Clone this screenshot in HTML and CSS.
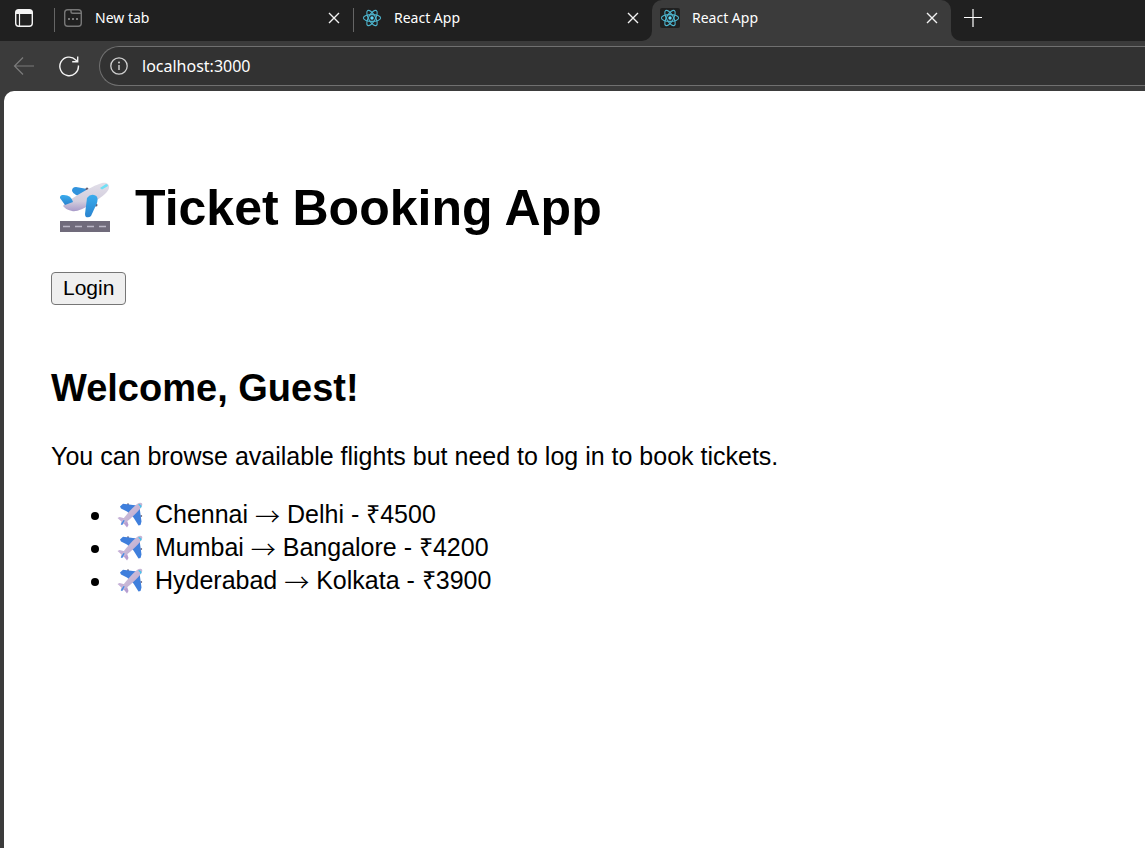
FILE: index.html
```
<!DOCTYPE html>
<html lang="en">
<head>
<meta charset="utf-8">
<title>React App</title>
<link rel="stylesheet" href="styles.css">
</head>
<body>
<svg class="defs" aria-hidden="true">
  <symbol id="react" viewBox="0 0 20 20">
    <g fill="none" stroke="#4db4cd" stroke-width="1.1">
      <ellipse cx="10" cy="10" rx="8.6" ry="3.4"/>
      <ellipse cx="10" cy="10" rx="8.6" ry="3.4" transform="rotate(60 10 10)"/>
      <ellipse cx="10" cy="10" rx="8.6" ry="3.4" transform="rotate(120 10 10)"/>
    </g>
    <circle cx="10" cy="10" r="1.7" fill="#61dafb"/>
  </symbol>
  <symbol id="close" viewBox="0 0 12 12">
    <path d="M1 1l10 10M11 1L1 11" fill="none" stroke="#f2f2f2" stroke-width="1.4"/>
  </symbol>
  <linearGradient id="body" x1="0" y1="0" x2="1" y2="1">
    <stop offset="0" stop-color="#d8c9dc"/><stop offset="1" stop-color="#b5a3cf"/>
  </linearGradient>
  <linearGradient id="wing" x1="0" y1="0" x2="0" y2="1">
    <stop offset="0" stop-color="#3aaced"/><stop offset="1" stop-color="#2a83cf"/>
  </linearGradient>
  <linearGradient id="hull" x1="0" y1="0" x2="0" y2="1">
    <stop offset="0" stop-color="#e2dfe9"/><stop offset=".65" stop-color="#d2cddd"/><stop offset="1" stop-color="#a99bc9"/>
  </linearGradient>
  <symbol id="plane" viewBox="0 0 26 26">
    <circle cx="11" cy="2.200" r="1" fill="#777184"/><circle cx="24.200" cy="14" r="1" fill="#777184"/>
    <path d="M3 4.500L6 1.800 20 3.500 14 13 10 9.500 4 6.500z" fill="#3f7fdc"/>
    <path d="M22.500 5L24.500 19.500l-1 3.500-2 .5-5-8-3-3z" fill="#3f7fdc"/>
    <path d="M.5 16l2-1 6 1.500-3 4z" fill="#c5b1d7"/>
    <path d="M9.500 17l2 6-1.500 2.500-4-5z" fill="#b69ed1"/>
    <path d="M4 20.500C7 15 15 6 20 2c2-1.500 4.500-1.500 5-.5.600 1 .2 2.500-.9 4C20 11 12 18.500 6 22.300c-1.500.700-2.500-.5-2-1.800z" fill="url(#body)"/>
    <path d="M3.700 22.600L6.500 18l1.200.6-2.500 4.500z" fill="#438be5"/>
    <path d="M21 2.500l1.600-.4 2 2-.5 1.600-1.200-.1.200-1.200z" fill="#42c5ee"/>
  </symbol>
</svg>
<div class="browser">
  <header>
    <div class="tabs">
      <button class="icon menu" aria-label="Tab actions">
        <svg width="20" height="20" viewBox="0 0 20 20"><rect x="1.700" y="1.700" width="16.600" height="16.600" rx="3" fill="none" stroke="#f4f4f4" stroke-width="1.400"/><path d="M1.700 6V4.500q0-2.800 2.800-2.800h11q2.800 0 2.800 2.800V6z" fill="#f4f4f4"/><path d="M5.500 6v12" stroke="#f4f4f4" stroke-width="1.200"/></svg>
      </button>
      <div class="tab ruled">
        <svg class="favicon" viewBox="0 0 20 20" fill="none" stroke="#777" stroke-width="1.400"><rect x="1.700" y="1.700" width="16.600" height="16.600" rx="3"/><path d="M8 2v1.500q0 1.800 1.800 1.800H18"/><path d="M5 11h2M9 11h2M13 11h2" stroke-width="2"/></svg>
        <span>New tab</span>
        <button class="icon close" aria-label="Close New tab"><svg width="12" height="12"><use href="#close"/></svg></button>
      </div>
      <div class="tab ruled">
        <svg class="favicon"><use href="#react"/></svg>
        <span>React App</span>
        <button class="icon close" aria-label="Close React App"><svg width="12" height="12"><use href="#close"/></svg></button>
      </div>
      <div class="tab active">
        <svg class="favicon dark"><use href="#react"/></svg>
        <span>React App</span>
        <button class="icon close" aria-label="Close active tab"><svg width="12" height="12"><use href="#close"/></svg></button>
      </div>
      <div class="rest">
        <button class="icon" aria-label="New tab"><svg width="18" height="18" viewBox="0 0 18 18"><path d="M0 8.500h18M9 0v18" stroke="#fff" stroke-width="1.200"/></svg></button>
      </div>
    </div>
    <div class="toolbar">
      <button class="icon" aria-label="Back"><svg width="22" height="20" viewBox="0 0 22 20"><path d="M21 10H2M10 1.500L1.500 10l8.500 8.500" fill="none" stroke="#7b7b7b" stroke-width="1.200"/></svg></button>
      <button class="icon" aria-label="Refresh"><svg width="22" height="22" viewBox="0 0 22 22"><path d="M20.400 10.500A9.300 9.300 0 1 1 17.800 4.900L19.500 6.600M19.700 1.500v5.300h-5.500" fill="none" stroke="#f4f4f4" stroke-width="1.400"/></svg></button>
      <label class="address">
        <svg width="18" height="18" viewBox="0 0 18 18"><circle cx="9" cy="9" r="8.200" fill="none" stroke="#d0d0d0" stroke-width="1.300"/><path d="M9 8v5" stroke="#d0d0d0" stroke-width="1.400"/><circle cx="9" cy="5.500" r="1" fill="#d0d0d0"/></svg>
        <input type="text" value="localhost:3000" aria-label="Address">
      </label>
    </div>
  </header>
  <main>
    <h1>
      <svg class="takeoff" viewBox="0 0 50 52" role="img" aria-label="Airplane departure">
        <path d="M12 9q0-4 4-4l17 3-9 7q-10-1-12-6z" fill="#3193dd"/>
        <circle cx="27" cy="7" r="1.500" fill="#655e70"/>
        <path d="M3 24C7 19 31 4 42 1c4-1 8 1 7 5-1 5-10 11-18 16-8 5-14 8-19 7-5-1-7-3-9-5z" fill="url(#hull)"/>
        <path d="M0 16q-.5-2 2-3 9-1 11 7l-8 3z" fill="url(#wing)"/>
        <circle cx="36" cy="23" r="1.500" fill="#655e70"/>
        <path d="M27 16q3-4 7-3c4 1 4 4 3 8l-6 13q-2 2-5 1-1-1-1-3z" fill="url(#wing)"/>
        <path d="M40 6l6-4q2 0 2 2l-6 3.500z" fill="#6fe0f5"/>
        <path d="M0 39h50v11H0z" fill="#706b7b"/>
        <path d="M3 44.500h7M15 44.500h7M27 44.500h7M39 44.500h7" stroke="#bbb7c6" stroke-width="1.300"/>
      </svg>
      Ticket Booking App
    </h1>
    <button class="login">Login</button>
    <h2>Welcome, Guest!</h2>
    <p>You can browse available flights but need to log in to book tickets.</p>
    <ul>
      <li><svg class="plane"><use href="#plane"/></svg> Chennai <span class="arrow">→</span> Delhi - ₹4500</li>
      <li><svg class="plane"><use href="#plane"/></svg> Mumbai <span class="arrow">→</span> Bangalore - ₹4200</li>
      <li><svg class="plane"><use href="#plane"/></svg> Hyderabad <span class="arrow">→</span> Kolkata - ₹3900</li>
    </ul>
  </main>
</div>
</body>
</html>
```
FILE: styles.css
```
* { box-sizing: border-box; }
body { margin: 0; }
.defs { position: absolute; width: 0; height: 0; }
.browser {
  display: flex;
  flex-direction: column;
  min-height: 100vh;
  background: #3b3b3b;
  font-family: "Liberation Sans", Arial, sans-serif;
}
header { font-family: "Noto Sans", sans-serif; color: #fff; }
.icon {
  display: grid;
  place-items: center;
  padding: 0;
  border: 0;
  background: none;
}
.tabs {
  display: flex;
  height: 41px;
}
.menu {
  width: 54px;
  padding: 0 6px 5px 0;
  background: #202020;
}
.tab {
  display: flex;
  align-items: center;
  flex: 0 1 299px;
  min-width: 0;
  padding: 0 13px 5px 9px;
  background: #202020;
  font-size: 14px;
}
.ruled {
  background: linear-gradient(#656565, #656565) 0 8px / 1px 24px no-repeat #202020;
}
.tab:has(+ .active) { border-bottom-right-radius: 10px; }
.active {
  padding-left: 8px;
  background: #3b3b3b;
  border-radius: 10px 10px 0 0;
  box-shadow: 0 -10px 0 #202020;
}
.favicon { width: 20px; height: 20px; flex: none; }
.dark { border-radius: 2px; background: #202020; }
.tab span { flex: 1; margin-left: 12px; line-height: 18px; white-space: nowrap; }
.close { width: 12px; height: 12px; }
.rest {
  display: flex;
  flex: 1;
  padding: 0 13px 5px;
  border-bottom-left-radius: 10px;
  background: #202020;
}
.toolbar {
  display: flex;
  align-items: center;
  height: 50px;
  padding-left: 13px;
}
.toolbar .icon { margin-right: 23px; }
.toolbar .icon + .icon { margin-right: 19px; }
.address {
  display: flex;
  align-items: center;
  flex: 1;
  gap: 14px;
  height: 40px;
  padding-left: 10px;
  border: 1px solid #707070;
  border-right: 0;
  border-radius: 20px 0 0 20px;
  background: #323232;
}
.address input {
  flex: 1;
  min-width: 0;
  padding: 0;
  border: 0;
  outline: 0;
  background: none;
  color: #fff;
  font: 16px "Noto Sans", sans-serif;
}
main {
  flex: 1;
  margin-left: 4px;
  padding: 88px 47px 32px;
  border-top-left-radius: 10px;
  background: #fff;
  color: #000;
  font-size: 25px;
}
h1 {
  display: flex;
  align-items: center;
  gap: 25px;
  margin: 0 0 35px;
  padding-left: 9px;
  font-size: 50px;
  line-height: 58px;
}
.takeoff { width: 50px; height: 52px; flex: none; }
.login {
  display: block;
  padding: 2px 11px 4px;
  border: 1px solid #767676;
  border-radius: 4px;
  background: #efefef;
  color: #000;
  font: 21px/25px "Liberation Sans", Arial, sans-serif;
}
h2 { margin: 62px 0 32px; font-size: 38px; line-height: 43px; }
p { margin: 0 0 27px; line-height: 29px; }
ul { margin: 0; padding-left: 62px; line-height: 33px; }
.plane { width: 26px; height: 26px; margin: 0 5px 0 4px; vertical-align: -5px; }
.arrow { font-family: "Noto Sans CJK JP", sans-serif; font-weight: 300; line-height: 1; vertical-align: -3px; }
```
